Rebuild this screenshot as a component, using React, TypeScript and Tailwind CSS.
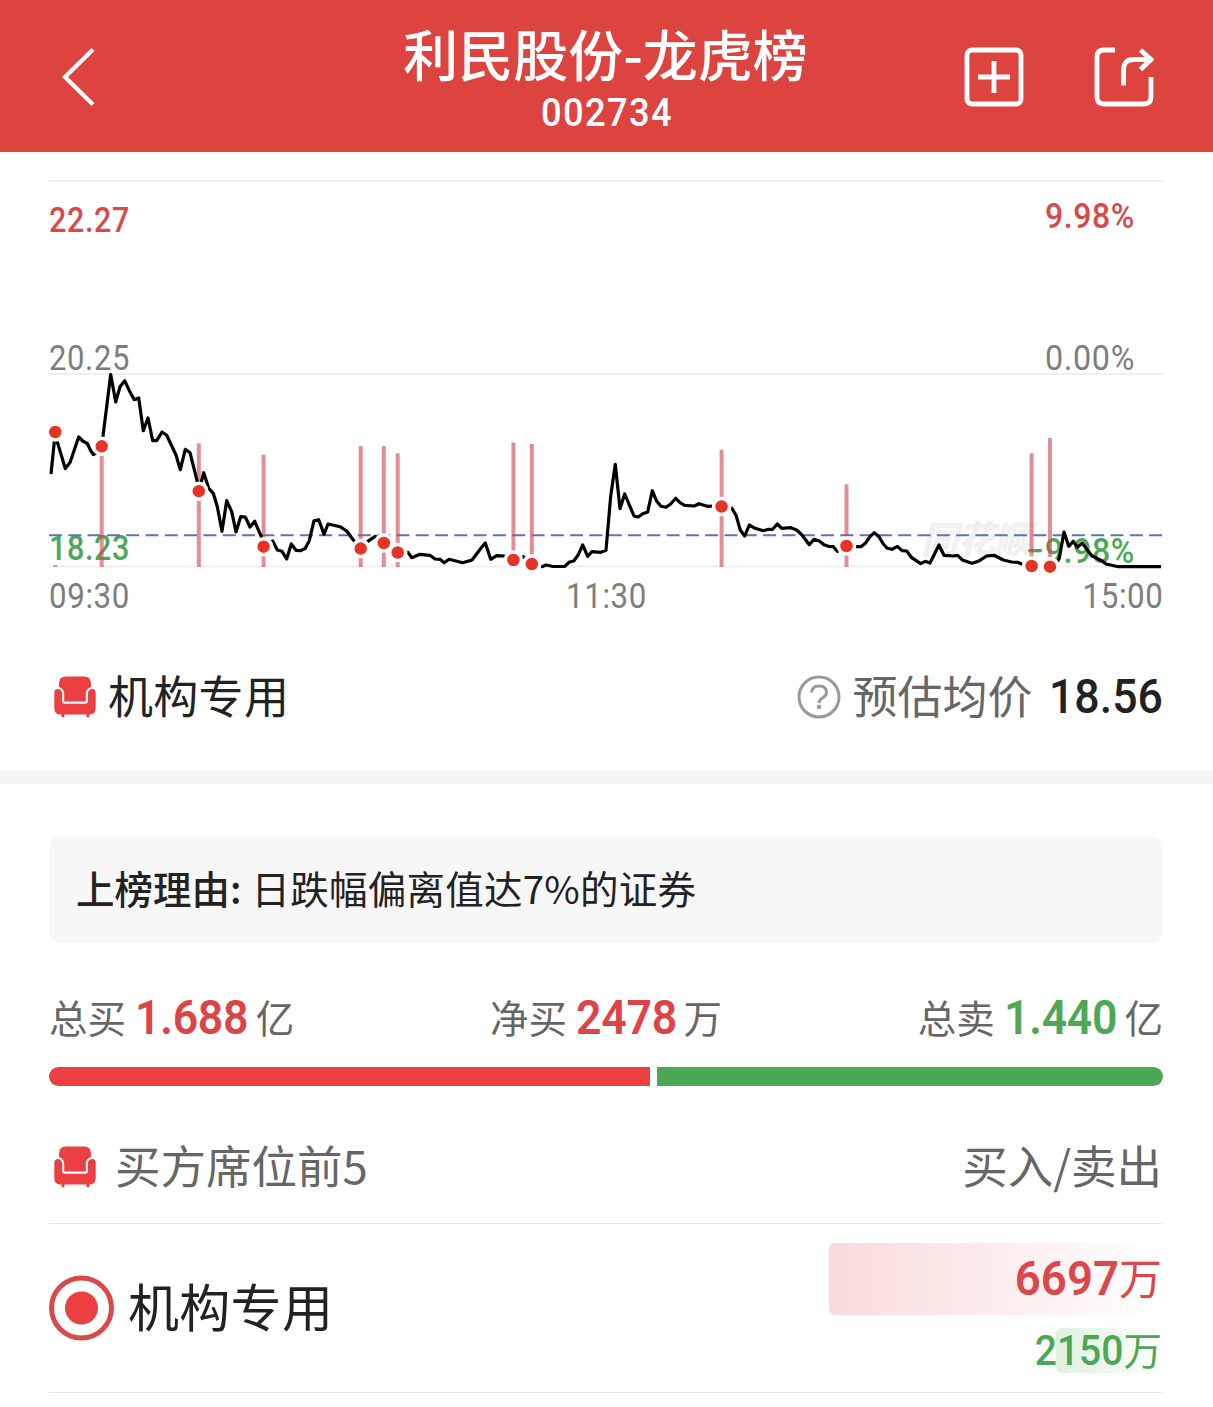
import React from 'react';

interface Trade {
  x: number;
  y: number;
  top: number;
}

const trades: Trade[] = [
  { x: 55.3, y: 432, top: 565 },
  { x: 101.7, y: 446.3, top: 446 },
  { x: 198.8, y: 491.2, top: 443.5 },
  { x: 263.6, y: 546.7, top: 454.7 },
  { x: 360.7, y: 548.6, top: 446 },
  { x: 383.8, y: 543, top: 446 },
  { x: 397.7, y: 552.5, top: 453.3 },
  { x: 513.4, y: 560, top: 442.5 },
  { x: 531.8, y: 564, top: 444 },
  { x: 721.6, y: 506.5, top: 449.7 },
  { x: 846.5, y: 546, top: 484.3 },
  { x: 1031.6, y: 566, top: 453.3 },
  { x: 1050, y: 566.7, top: 438 },
];

const pricePoints = `51,474 54.7,438 56,438 57.3,442 65.3,468.5 70,462.5 78.7,437 82.7,441 87.3,443.5 90.7,450.7 93.3,454.5 101.7,450
103,436 110.7,374.5 115.7,402 120,386.7 124.7,380.7 129.3,390.7 134.3,399.7 138.7,398 143.3,430.7 148,418 152.7,440.7 156.7,440.7
162,432 166.7,435.3 176,455 180.3,469.7 185.3,449.3 190,452.7 197.3,481.7 199,491 203.7,472.7 208.7,488.3 213.3,493.3 217.3,506.7
222,531.3 226.7,500.7 231.7,511.7 236,532 240.7,516.7 245.3,517 250,527 254.7,521.3 261.3,536.7 263.7,546.7 272.7,541 277.3,550
282,551.3 286.7,559 291.3,544 296,550.3 300.7,550.7 305.3,548.3 309.3,540.7 314,520.7 318.7,519.7 324,534.3 328,524 340,526.7
346.7,531 352.7,539.3 360.7,548.7 367.7,541.3 375.3,536.3 383.7,543 397.7,552.7 408,552.3 411.7,557.7 420,554.3 430,555.3 435,559
440,559.3 444.3,562.7 449,559.3 462.7,562.7 472,560 481.7,547.3 485.3,543 490.7,559.3 496.7,555.7 504.7,556 513.3,560 523.3,556.7
531.7,564.3 542,566.7 546,565 553.3,566.5 564.7,566.5 569,562.3 573.7,561 578.3,554.7 582.7,545 587.7,556.3 592,551.7 600.7,552.3
606,550.3 610.7,496 615.3,464.3 620,508.7 624.7,494 634,516 638.3,517 642.7,513.7 647.7,512 652.3,490.7 656.7,501.3 661,506.3
666,507.3 670.7,504 675.7,498.3 680,502.7 684.7,505.3 694.3,506 699,503.7 707.3,506.3 713.3,506 721.7,506.3 731.7,508 736,515.3
740.3,530 744.7,536 749.3,525 755,528.3 763.3,530.7 768.3,529.3 772.7,529.3 777.3,524 781.7,528.3 790.7,527.7 796.7,530 802,535
809.3,544.7 814,539.3 819.3,541 824,544.7 828.3,546.3 833.3,546.7 837.3,551.3 846.3,546 856.7,546.7 861,546.7 865.3,543.3 870,536.7
874.3,532.7 879,536.7 883.3,544 887.3,548.3 892,549.3 897.3,546.3 902,550.7 906.7,551 911.7,557.7 920.7,563.7 925.3,561.3 930,563
939,545 944,555.3 953.3,556 957.7,555.3 962.3,560 972,563.3 978.3,561.3 986.7,556 994,555.3 1003.3,560 1011.7,562 1017.3,562.3
1021.7,564 1031.3,566 1050,566.7 1057.7,561.3 1059.3,558.3 1064,532 1068.7,546.3 1073.3,541.3 1077.3,547.3 1082.3,543.3
1091.7,555.7 1101.7,560.7 1106,564 1118.3,566.7 1161,566.7`;

function SofaIcon() {
  return (
    <svg className="h-[42px] w-[42px] shrink-0" viewBox="0 0 42 42" fill="#eb3f41">
      <path d="M5 11V7.500Q5 0.500 12 0.500H30Q37 0.500 37 7.500V11Q32 12.500 31.800 18V25.500H10.200V18Q10 12.500 5 11Z" />
      <path d="M4 13Q8 13.500 8.200 18V25.500Q8.200 27.800 10.500 27.800H31.500Q33.800 27.800 33.800 25.500V18Q34 13.500 38 13Q41.700 13 41.700 17V32Q41.700 38 36 38.500H35.500V39.500Q35.500 41.500 34 41.500Q32.300 41.500 32.300 39.500V38.500H10.500V39.500Q10.500 41.500 9 41.500Q7.500 41.500 7.500 39.500V38.500H6Q0.300 38 0.300 32V17Q0.300 13 4 13Z" />
    </svg>
  );
}

function Header() {
  return (
    <header className="flex h-[152px] items-start justify-between bg-[#dd4440] text-white">
      <button className="ml-[60px] mt-[47px] w-[189px]">
        <svg className="h-[60px] w-[36px]" viewBox="0 0 36 60" fill="none" stroke="currentColor" strokeWidth="4.200">
          <path d="M33 2.500L5 30L33 57.500" />
        </svg>
      </button>
      <div className="flex w-[420px] flex-col items-center whitespace-nowrap pr-[2px]">
        <h1 className="mt-[15px] text-[55px] leading-[74px] font-medium">利民股份-龙虎榜</h1>
        <p className="mt-[4px] ml-[2px] scale-x-[0.93] font-[Roboto] text-[39px] leading-[40px] font-medium tracking-[1.500px]">002734</p>
      </div>
      <div className="mr-[59px] mt-[47px] flex gap-[70px]">
        <svg className="h-[60px] w-[60px]" viewBox="0 0 60 60" fill="none" stroke="currentColor" strokeWidth="4.800">
          <rect x="3" y="3" width="54" height="54" rx="5" />
          <path d="M14 30H46M30 14V46" />
        </svg>
        <svg className="h-[60px] w-[60px]" viewBox="0 0 60 60" fill="none" stroke="currentColor" strokeWidth="4.800">
          <path d="M21 3H10Q3 3 3 10V50Q3 57 10 57H50Q57 57 57 50V30" />
          <path d="M29.500 38.500V23Q29.500 12.500 40 12.500H56M46.500 3L57 12.500L46.500 22.500" />
        </svg>
      </div>
    </header>
  );
}

function PriceChart() {
  return (
    <svg className="mx-[49px] mt-[28px] block h-[436px] w-[1115px] overflow-visible" viewBox="49 180 1115 436">
      <path d="M49 181H1164M49 374H1164M49 566.500H1164" stroke="#efefef" strokeWidth="2" />
      <text x="921" y="553" textLength="110" fontSize="37" fontWeight="900" fontStyle="italic" fill="#f1f1f1">同花顺</text>
      <g className="font-[Roboto] tracking-[0.700px]" fontSize="35" fontWeight="500">
        <g fill="#d9484a">
          <text x="49" y="232" textLength="81" lengthAdjust="spacingAndGlyphs">22.27</text>
          <text x="1045" y="228" textLength="90" lengthAdjust="spacingAndGlyphs">9.98%</text>
        </g>
        <g fill="#7d7d7d" fontWeight="400">
          <text x="49" y="370" textLength="81" lengthAdjust="spacingAndGlyphs">20.25</text>
          <text x="1045" y="370" textLength="90" lengthAdjust="spacingAndGlyphs">0.00%</text>
          <text x="49" y="608" textLength="81" lengthAdjust="spacingAndGlyphs">09:30</text>
          <text x="566" y="608" textLength="81" lengthAdjust="spacingAndGlyphs">11:30</text>
          <text x="1082.500" y="608" textLength="81" lengthAdjust="spacingAndGlyphs">15:00</text>
        </g>
        <g fill="#4ea657">
          <text x="49" y="560" textLength="81" lengthAdjust="spacingAndGlyphs">18.23</text>
          <text x="1026" y="563" textLength="109" lengthAdjust="spacingAndGlyphs">−9.98%</text>
        </g>
      </g>
      <path d="M49 535.300H1163" stroke="#5b74b5" strokeWidth="2" strokeDasharray="13 6.300" fill="none" />
      {trades.map((t) => (
        <path key={t.x} d={`M${t.x} ${t.top}V567`} stroke="#cf4a52" strokeOpacity="0.620" strokeWidth="4" />
      ))}
      <polyline points={pricePoints} fill="none" stroke="#000" strokeWidth="3.200" strokeLinejoin="round" />
      {trades.map((t) => (
        <circle key={t.x} cx={t.x} cy={t.y} r="8" fill="#e63323" stroke="#fff" strokeWidth="3.500" />
      ))}
    </svg>
  );
}

interface StatProps {
  label: string;
  value: string;
  unit: string;
  color: string;
}

function Stat({ label, value, unit, color }: StatProps) {
  return (
    <div className="flex h-[56px] items-center text-[38.500px] leading-[56px] text-[#666]">
      <span className="mt-[-2px]">{label}</span>
      <span className={`mt-[2px] mr-[-1px] ml-[9px] inline-block origin-left scale-x-[0.930] font-[Roboto] text-[48px] font-semibold tracking-[-0.300px] ${color}`}>{value}</span>
      <span className="mt-[-2px]">{unit}</span>
    </div>
  );
}

export default function App() {
  return (
    <div className="h-[1407px] w-[1213px] overflow-hidden bg-white text-[#222] [font-family:'Noto_Sans_CJK_SC',sans-serif]">
      <Header />
      <PriceChart />

      <section className="mt-[48px] flex h-[66px] items-center pl-[54px] pr-[42px] text-[45px] leading-[66px]">
        <SofaIcon />
        <span className="mt-[-5px] ml-[12px] tracking-[0.300px]">机构专用</span>
        <svg className="ml-auto h-[44px] w-[44px]" viewBox="0 0 44 44" fill="none" stroke="#999" strokeWidth="3">
          <circle cx="22" cy="22" r="20" />
          <path d="M14.500 17.500Q15 11 22 11Q29.500 11 29.500 17.500Q29.500 20.500 26 22.500Q22 25 22 28" />
          <circle cx="22" cy="32" r="2.300" fill="#999" stroke="none" />
        </svg>
        <span className="mt-[-5px] ml-[12px] text-[#666]">预估均价</span>
        <span className="ml-[16px] inline-block origin-left scale-x-[0.930] font-[Roboto] text-[48px] font-medium">18.56</span>
      </section>

      <div className="mt-[41px] h-[13px] bg-[#f5f5f5]" />

      <section className="mr-[50px] ml-[49px] mt-[52px] flex h-[107px] items-center gap-[10px] rounded-xl bg-[#f7f7f7] pb-[3px] pl-[27px] text-[38.500px]">
        <span className="font-medium">上榜理由:</span>
        <span className="tracking-[0.250px]">日跌幅偏离值达7%的证券</span>
      </section>

      <section className="mr-[50px] ml-[49px] mt-[46px]">
        <div className="flex justify-between">
          <Stat label="总买" value="1.688" unit="亿" color="text-[#dc4547]" />
          <Stat label="净买" value="2478" unit="万" color="text-[#dc4547]" />
          <Stat label="总卖" value="1.440" unit="亿" color="text-[#4da856]" />
        </div>
        <div className="mt-[22px] flex h-[19px] gap-[7px]">
          <div className="w-[601px] rounded-l-full bg-[#eb3f41]" />
          <div className="flex-1 rounded-r-full bg-[#4da856]" />
        </div>
      </section>

      <section className="mr-[50px] ml-[49px]">
        <div className="mt-[48px] flex h-[66px] items-center pl-[5px] pr-[1px] text-[45.500px] leading-[66px] text-[#666]">
          <SofaIcon />
          <span className="mt-[-7px] ml-[19px]">买方席位前5</span>
          <span className="mt-[-7px] ml-auto">买入/卖出</span>
        </div>
        <div className="mt-[23px] flex h-[170px] justify-between border-y border-[#e8e8e8]">
          <div className="flex items-center text-[51px]">
            <svg className="ml-[-1px] h-[66px] w-[66px]" viewBox="0 0 66 66">
              <circle cx="33.500" cy="33" r="30" fill="none" stroke="#d9484a" strokeWidth="5" />
              <circle cx="33.500" cy="33" r="16.500" fill="#eb3f41" />
            </svg>
            <span className="mt-[-5px] ml-[14px] tracking-[0.300px]">机构专用</span>
          </div>
          <div className="mt-[19px] flex flex-col items-end">
            <div className="flex h-[72px] w-[334px] items-baseline justify-end rounded-md bg-linear-to-r from-[#f9dadb] to-white pr-[1px] leading-[66px] text-[#d9484a]">
              <span className="inline-block origin-right scale-x-[0.930] font-[Roboto] text-[49px] font-semibold">6697</span>
              <span className="text-[43px]">万</span>
            </div>
            <div className="mt-[13px] flex h-[45px] w-[107px] items-baseline justify-end whitespace-nowrap rounded-md bg-linear-to-r from-[#def1df] to-white pr-[1px] leading-[40px] text-[#4ea657]">
              <span className="inline-block origin-right scale-x-[0.930] font-[Roboto] text-[42px] font-medium">2150</span>
              <span className="text-[38.500px]">万</span>
            </div>
          </div>
        </div>
      </section>
    </div>
  );
}
